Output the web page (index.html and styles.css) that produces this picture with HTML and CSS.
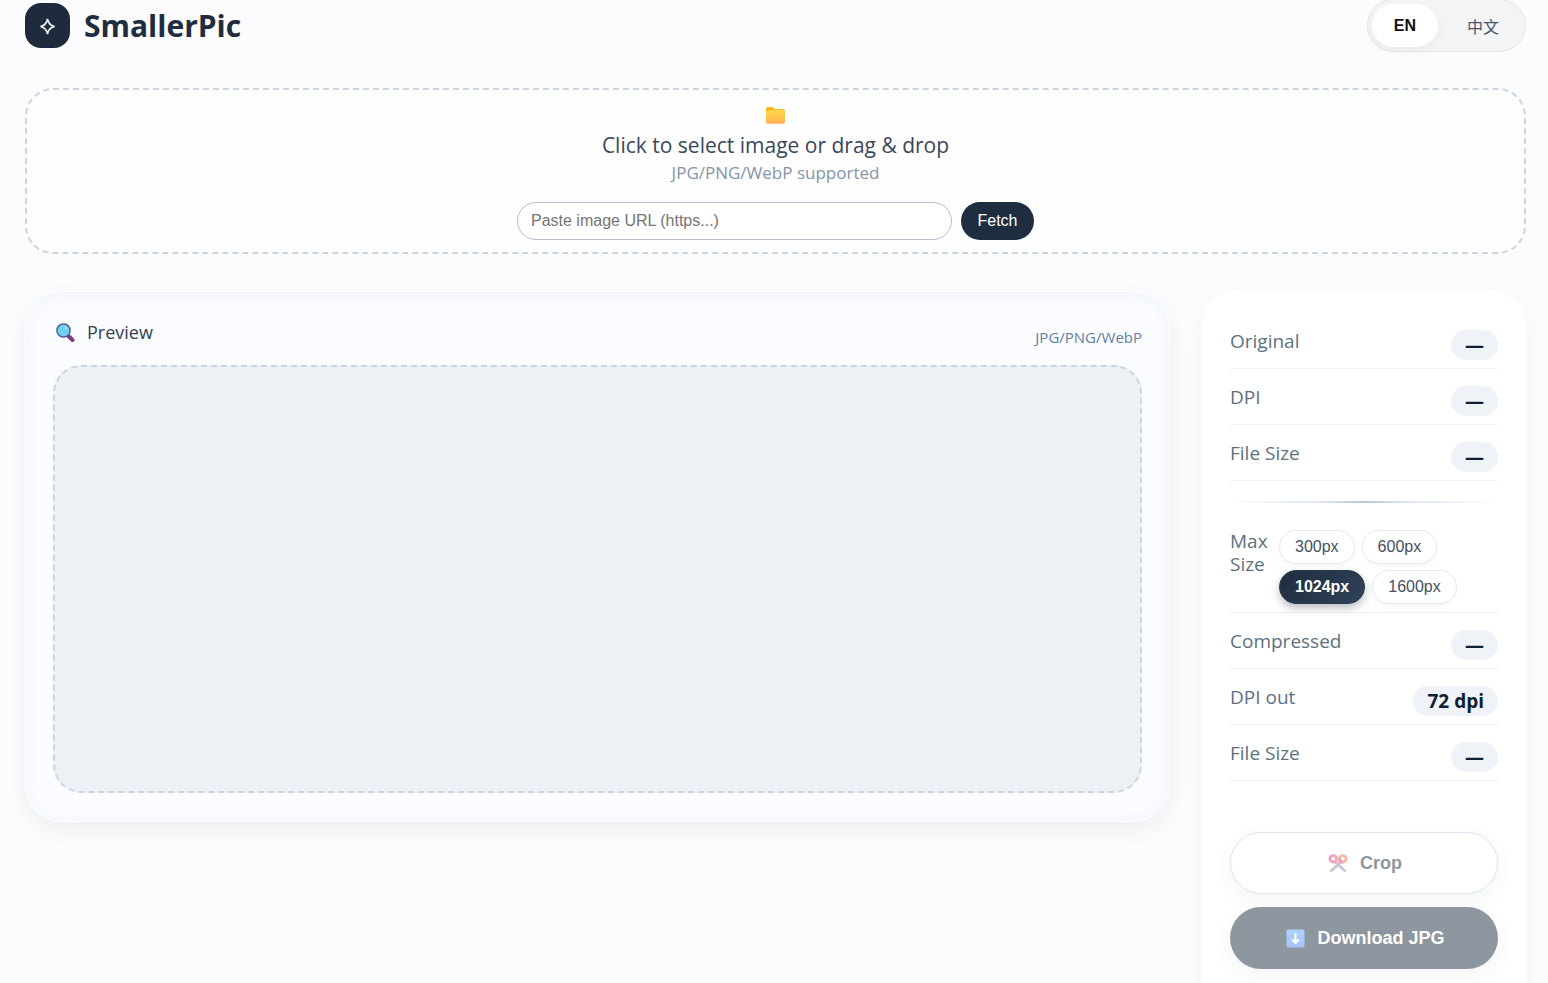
FILE: index.html
```html
<!DOCTYPE html>
<html lang="en">
<head>
  <meta charset="UTF-8" />
  <meta name="viewport" content="width=device-width, initial-scale=1" />
  <title>SmallerPic</title>
  <link rel="stylesheet" href="styles.css">
</head>
<body>

  <header class="header">
    <div class="brand">
      <div class="logo">
        <svg width="19" height="19" viewBox="0 0 19 19" fill="none" stroke="#f1f3f5" stroke-width="1.6">
          <path d="M9.500 3Q10.500 9 16.500 10.500Q10.500 12 9.500 18Q8.500 12 2.500 10.500Q8.500 9 9.500 3Z" />
        </svg>
      </div>
      <h1>SmallerPic</h1>
    </div>
    <div class="lang-switch">
      <button type="button" class="lang active">EN</button>
      <button type="button" class="lang">中文</button>
    </div>
  </header>

  <section class="dropzone" id="dropzone">
    <svg class="folder" width="20" height="18" viewBox="0 0 20 18">
      <defs>
        <linearGradient id="folderFill" x1="0" y1="0" x2="0" y2="1">
          <stop offset="0" stop-color="#fdd84a" />
          <stop offset="1" stop-color="#fdb350" />
        </linearGradient>
      </defs>
      <path d="M0 2Q0 0 2 0H6.500L9 2H17Q19 2 19 4V10H0Z" fill="#f9b826" />
      <path d="M0 5.500Q0 3.800 2 3.800H7.500L9.500 2.800H17Q19 2.800 19 4.500V15Q19 16.800 17 16.800H2Q0 16.800 0 15Z" fill="url(#folderFill)" />
    </svg>
    <p class="drop-title">Click to select image or drag &amp; drop</p>
    <p class="drop-hint">JPG/PNG/WebP supported</p>
    <form class="url-form" id="urlForm">
      <input type="url" id="imageUrl" aria-label="Image URL" placeholder="Paste image URL (https...)" />
      <button type="submit">Fetch</button>
    </form>
  </section>

  <main class="layout">
    <section class="preview-card">
      <div class="preview-head">
        <h2>
          <svg width="20" height="20" viewBox="0 0 20 20">
            <path d="M13 14.500L16.500 18" stroke="#7b4283" stroke-width="4" stroke-linecap="round" />
            <path d="M11 12.500L13 14.500" stroke="#503c78" stroke-width="2" />
            <circle cx="7.500" cy="8.500" r="6.600" fill="#70d0ee" stroke="#46508e" stroke-width="1.300" />
            <circle cx="10" cy="6" r="1.300" fill="#a9e8f8" />
          </svg>
          Preview
        </h2>
        <span class="formats">JPG/PNG/WebP</span>
      </div>
      <div class="preview-area"></div>
    </section>

    <aside class="side-card">
      <div class="row"><span class="label">Original</span><span class="value">—</span></div>
      <div class="row"><span class="label">DPI</span><span class="value">—</span></div>
      <div class="row"><span class="label">File Size</span><span class="value">—</span></div>

      <div class="divider"></div>

      <div class="row size-row">
        <span class="label">Max Size</span>
        <div class="chips">
          <button type="button" class="chip">300px</button>
          <button type="button" class="chip">600px</button>
          <button type="button" class="chip active">1024px</button>
          <button type="button" class="chip">1600px</button>
        </div>
      </div>
      <div class="row"><span class="label">Compressed</span><span class="value">—</span></div>
      <div class="row"><span class="label">DPI out</span><span class="value">72 dpi</span></div>
      <div class="row"><span class="label">File Size</span><span class="value">—</span></div>

      <div class="actions">
        <button type="button" class="btn" disabled>
          <svg width="20" height="20" viewBox="0 0 20 20" fill="none">
            <path d="M7 9L16.500 17.500M13 9L3.500 17.500" stroke="#9c86b4" stroke-width="3" stroke-linecap="round" />
            <circle cx="5.200" cy="5.800" r="3.300" stroke="#f0347c" stroke-width="2.600" />
            <circle cx="14.800" cy="5.800" r="3.300" stroke="#fb6a3c" stroke-width="2.600" />
            <path d="M11.500 5.800Q11.500 9.100 14.800 9.100" stroke="#f0347c" stroke-width="2.600" />
            <path d="M8.500 5.800Q8.500 9.100 6.500 9" stroke="#fb6a3c" stroke-width="2.600" />
          </svg>
          Crop
        </button>
        <button type="button" class="btn btn-dark" disabled>
          <svg width="20" height="20" viewBox="0 0 20 20">
            <defs>
              <linearGradient id="arrowFill" x1="0" y1="0" x2="0" y2="1">
                <stop offset="0" stop-color="#58acff" />
                <stop offset="1" stop-color="#4f86f7" />
              </linearGradient>
            </defs>
            <rect x="1.500" y="1.500" width="18" height="18" rx="1.500" fill="url(#arrowFill)" />
            <path d="M10.500 5V14.500M7.200 11.500L10.500 15L13.800 11.500" fill="none" stroke="#fff" stroke-width="2" />
          </svg>
          Download JPG
        </button>
      </div>
    </aside>
  </main>

  <script>
    function pickOne(selector) {
      const items = document.querySelectorAll(selector);
      items.forEach((item) => {
        item.addEventListener('click', () => {
          items.forEach((other) => other.classList.remove('active'));
          item.classList.add('active');
        });
      });
    }

    pickOne('.lang');
    pickOne('.chip');

    document.getElementById('urlForm').addEventListener('submit', (e) => {
      e.preventDefault();
    });
  </script>
</body>
</html>
```
FILE: styles.css
```css
* {
  box-sizing: border-box;
}

body {
  font-family: 'Open Sans', 'Noto Sans', 'Noto Sans CJK SC', sans-serif;
  background: #fcfcff;
  margin: 0;
  padding: 0 22px 0 25px;
  color: #1f2d3f;
  overflow: hidden;
}

h1, h2, p {
  margin: 0;
}

button, input {
  font-family: 'Liberation Sans', 'Noto Sans CJK SC', sans-serif;
  font-size: 16px;
}

button {
  cursor: pointer;
}

.header {
  display: flex;
  justify-content: space-between;
  align-items: center;
  height: 51px;
}

.brand {
  display: flex;
  align-items: center;
  gap: 14px;
}

.logo {
  display: flex;
  align-items: center;
  justify-content: center;
  width: 45px;
  height: 45px;
  border-radius: 16px;
  background: #1f2b3d;
}

h1 {
  font-size: 30px;
  line-height: 45px;
  font-weight: 700;
}

.lang-switch {
  display: flex;
  padding: 4px;
  border: 1px solid #e4e5e8;
  border-radius: 27px;
  background: #f3f4f6;
}

.lang {
  height: 43px;
  padding: 0 22px;
  border: none;
  border-radius: 22px;
  background: transparent;
  color: #47566b;
}

.lang:last-child {
  padding: 0 22px 0 29px;
}

.lang.active {
  background: #fff;
  color: #111;
  font-weight: bold;
  box-shadow: 0 4px 12px rgba(0, 0, 0, 0.04);
}

.dropzone {
  display: flex;
  flex-direction: column;
  align-items: center;
  margin-top: 37px;
  padding: 17px 20px 12px;
  border: 2px dashed #cbd5e1;
  border-radius: 28px;
  background: #fefefe;
}

.drop-title {
  margin-top: 6px;
  font-size: 21px;
  line-height: 28px;
  color: #3a475c;
}

.drop-hint {
  font-size: 17px;
  line-height: 28px;
  color: #8495aa;
}

.url-form {
  display: flex;
  gap: 9px;
  width: 100%;
  max-width: 517px;
  margin-top: 15px;
}

.url-form input {
  flex: 1;
  min-width: 0;
  height: 38px;
  padding: 0 13px;
  border: 1px solid #b4bfd2;
  border-radius: 19px;
  background: #fff;
}

.url-form input::placeholder {
  color: #757575;
}

.url-form button {
  min-width: 73px;
  height: 38px;
  padding: 0 16px;
  border: none;
  border-radius: 19px;
  background: #1f2d40;
  color: #fff;
}

.layout {
  display: grid;
  grid-template-columns: 1fr 324px;
  gap: 32px;
  align-items: start;
  margin-top: 36px;
}

.preview-card {
  margin-top: 1px;
  padding: 26px 27px 28px;
  border: 1px solid #fff;
  border-radius: 36px;
  background: #fafcff;
  box-shadow: 0 8px 24px rgba(0, 0, 0, 0.06), inset 0 2px 14px rgba(190, 202, 222, 0.18);
}

.preview-head {
  display: flex;
  justify-content: space-between;
  align-items: flex-end;
  height: 47px;
  padding-bottom: 9px;
}

.preview-head h2 {
  display: flex;
  align-items: center;
  gap: 11px;
  padding: 0 0 12px 3px;
  font-size: 18px;
  line-height: 24px;
  font-weight: 400;
  color: #334155;
}

.formats {
  padding-bottom: 9px;
  font-size: 15px;
  line-height: 20px;
  color: #647ea3;
}

.preview-area {
  height: 428px;
  border: 2px dashed #cbd5e1;
  border-radius: 28px;
  background: #edf1f6;
}

.side-card {
  padding: 23px 28px 64px;
  border-radius: 36px;
  background: #fff;
  box-shadow: 0 8px 28px rgba(0, 0, 0, 0.04);
}

.row {
  display: flex;
  justify-content: space-between;
  align-items: flex-end;
  min-height: 56px;
  padding: 8px 0;
  border-bottom: 1px solid #f0f1f3;
}

.label {
  align-self: flex-start;
  padding-top: 9px;
  font-size: 19px;
  line-height: 23px;
  color: #5c717f;
}

.value {
  padding: 0 14px;
  border-radius: 15px;
  background: #eff2f7;
  color: #0f2033;
  font-size: 19px;
  line-height: 30px;
  font-weight: 700;
}

.divider {
  height: 2px;
  margin: 20px 0 19px;
  background: linear-gradient(90deg, transparent, #dbe5f2 35%, #b4c6d8 50%, #dbe5f2 65%, transparent);
}

.size-row {
  justify-content: flex-start;
  gap: 12px;
}

.size-row .label {
  flex: none;
  width: 37px;
  padding-top: 0;
}

.chips {
  display: flex;
  flex-wrap: wrap;
  gap: 6px 7px;
}

.chip {
  height: 34px;
  padding: 0 15px;
  border: 1px solid #e4eaf3;
  border-radius: 17px;
  background: #fff;
  color: #445064;
  box-shadow: 0 2px 5px rgba(0, 0, 0, 0.04);
}

.chip.active {
  border-color: #2b3a4d;
  background: linear-gradient(135deg, #1f2d3d, #30425a);
  color: #fff;
  font-weight: bold;
  box-shadow: 0 4px 8px rgba(31, 45, 61, 0.3);
}

.actions {
  display: flex;
  flex-direction: column;
  gap: 13px;
  margin-top: 51px;
}

.btn {
  display: flex;
  align-items: center;
  justify-content: center;
  gap: 12px;
  height: 62px;
  padding: 0 6px 0 8px;
  border: 1px solid #b8cbe0;
  border-radius: 31px;
  background: #fff;
  color: #1f2d3f;
  font-size: 18px;
  font-weight: bold;
  box-shadow: 0 6px 16px rgba(40, 70, 80, 0.1);
}

.btn:disabled {
  opacity: 0.5;
}

.btn-dark {
  border: none;
  background: #1f2f41;
  color: #fff;
}

@media (max-width: 900px) {
  body {
    overflow: auto;
  }

  .layout {
    grid-template-columns: 1fr;
  }
}
```
